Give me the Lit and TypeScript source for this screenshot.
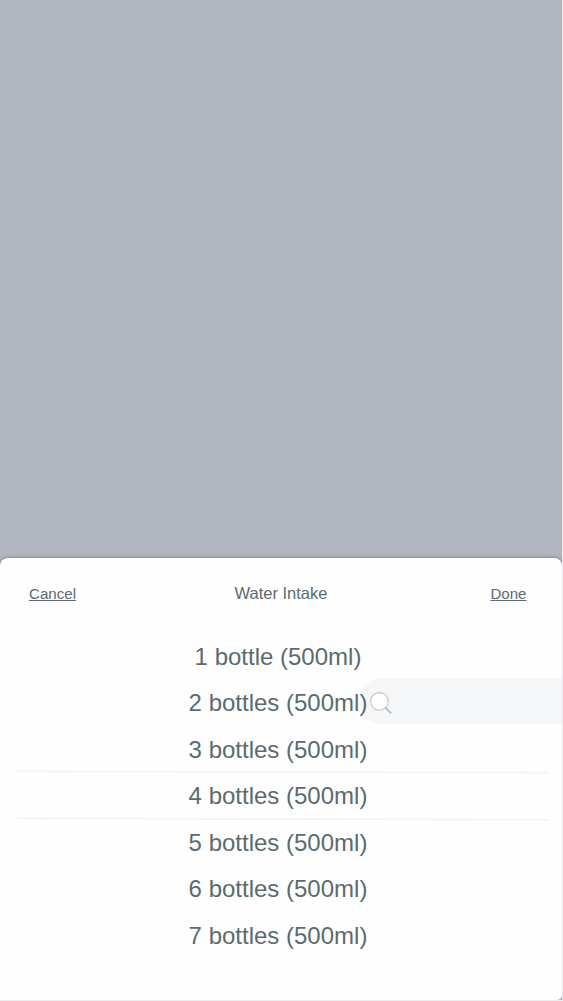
import { LitElement, html, css, svg } from 'lit';
import { customElement, property } from 'lit/decorators.js';

@customElement('search-pill')
class SearchPill extends LitElement {
  static styles = css`
    :host {
      display: flex;
      align-items: center;
      box-sizing: border-box;
      height: 46px;
      padding-left: 10px;
      border-radius: 23px 0 0 23px;
      background: #f5f6f8;
    }
    svg { display: block; margin-top: 4px; }
  `;
  render() {
    return html`<svg width="24" height="24" viewBox="0 0 24 24" fill="none">
      ${svg`<circle cx="10.4" cy="10.4" r="8.8" fill="#fff" stroke="#c0c4c4" stroke-width="1.1"/>
      <path d="M16.4 16.6L22.2 22.4" stroke="#b4baba" stroke-width="1.7"/>`}
    </svg>`;
  }
}

@customElement('app-root')
class AppRoot extends LitElement {
  @property({ type: Array }) options = [1, 2, 3, 4, 5, 6, 7];

  static styles = css`
    :host {
      display: flex;
      flex-direction: column;
      justify-content: flex-end;
      box-sizing: border-box;
      height: 1001px;
      width: 563px;
      border-right: 1px solid #ececee;
      border-bottom: 1px solid #ececee;
      background: #b2b6c1;
      overflow: hidden;
      font-family: 'Liberation Sans', Arial, sans-serif;
      color: #5b6b6f;
    }
    .sheet {
      position: relative;
      box-sizing: border-box;
      height: 442px;
      border-radius: 8px 8px 5px 0;
      background: #fefefe;
      box-shadow: 0 -1px 3px rgba(70, 74, 90, 0.4);
    }
    .bar {
      display: grid;
      grid-template-columns: 1fr auto 1fr;
      align-items: center;
      height: 70px;
      padding: 0 35.5px 0 29px;
    }
    .action {
      font-size: 15.1px;
      text-decoration: underline;
      text-decoration-thickness: 1.4px;
      text-underline-offset: 1px;
    }
    .done { justify-self: end; }
    .title { font-size: 16.5px; margin-left: 6.5px; }
    .wheel {
      display: flex;
      flex-direction: column;
      margin: 5.5px 13px 0 17px;
    }
    .row {
      display: flex;
      align-items: center;
      justify-content: center;
      box-sizing: border-box;
      height: 46.5px;
      padding-right: 10px;
      font-size: 24px;
      white-space: pre;
      position: relative;
      z-index: 1;
    }
    .rule {
      display: block;
      width: 100%;
      height: 4px;
      margin: -3px 0 -1px;
    }
    .search {
      position: absolute;
      left: 359px;
      right: 0;
      top: 120px;
    }
  `;

  renderRule() {
    return html`<svg class="rule" viewBox="0 0 532 4" preserveAspectRatio="none">
      ${svg`<path d="M0 1.3L532 2.7" stroke="#f4f4f5" stroke-width="2"/>`}
    </svg>`;
  }

  render() {
    return html`
      <div class="sheet">
        <search-pill class="search"></search-pill>
        <div class="bar">
          <span class="action">Cancel</span>
          <span class="title">Water Intake</span>
          <span class="action done">Done</span>
        </div>
        <div class="wheel">
          ${this.options.map((n) => html`
            ${n === 4 || n === 5 ? this.renderRule() : ''}
            <div class="row">${n} ${n === 1 ? 'bottle' : 'bottles'} (500ml)</div>
          `)}
        </div>
      </div>
    `;
  }
}
